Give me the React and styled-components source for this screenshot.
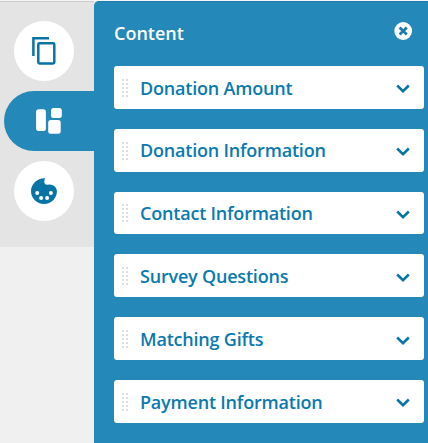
import { useState } from 'react';
import styled, { createGlobalStyle } from 'styled-components';

const GlobalStyle = createGlobalStyle`
  * {
    box-sizing: border-box;
  }

  body {
    margin: 0;
    overflow: hidden;
    background: #f0f0f0;
    font-family: 'Open Sans', 'Noto Sans', sans-serif;
  }

  button {
    border: none;
    padding: 0;
    font: inherit;
    cursor: pointer;
  }
`;

const Layout = styled.div`
  display: flex;
  align-items: flex-start;
  width: 428px;
  height: 443px;
  background: linear-gradient(#f5f5f5 1px, #f0f0f0 1px);
`;

const Sidebar = styled.nav`
  display: flex;
  flex-direction: column;
  align-items: flex-end;
  gap: 10px;
  width: 94px;
  height: 246px;
  margin-top: 1px;
  padding-top: 19px;
  background: #e4e4e4;
  border-top: 1px solid #c9cccb;
`;

const TabButton = styled.button`
  display: flex;
  align-items: center;
  width: ${props => props.$active ? '90px' : '60px'};
  height: 60px;
  margin-right: ${props => props.$active ? '0' : '20px'};
  padding-left: ${props => props.$active ? '30px' : '15px'};
  border-radius: ${props => props.$active ? '30px 0 0 30px' : '50%'};
  background: ${props => props.$active ? '#2488b8' : '#fff'};
  color: ${props => props.$active ? '#fff' : '#0873a5'};
`;

const Panel = styled.section`
  width: 334px;
  height: 442px;
  margin-top: 1px;
  padding: 20px 4px 0 20px;
  background: #2488b8;
  border-top: 1px solid #1d7dac;
  border-top-left-radius: 5px;
`;

const PanelHeader = styled.header`
  display: flex;
  justify-content: space-between;
  height: 44px;
  padding-right: 11px;
`;

const PanelTitle = styled.h2`
  margin: -1px 0 0;
  color: #fff;
  font-size: 18px;
  font-weight: 600;
  line-height: 24px;
`;

const CloseButton = styled.button`
  display: flex;
  width: 20px;
  height: 20px;
  background: transparent;
`;

const SectionList = styled.div`
  display: flex;
  flex-direction: column;
  gap: 20px;
`;

const SectionCard = styled.button`
  display: flex;
  align-items: center;
  width: 310px;
  height: 42.8px;
  padding: 0 13px 0 8px;
  border-radius: 3px;
  background: #fff;
  color: #0a7aae;
  text-align: left;
`;

const SectionName = styled.span`
  flex: 1;
  margin: 0.6px 0 0 12px;
  font-size: 18px;
  font-weight: 600;
  letter-spacing: -0.2px;
  line-height: 24px;
  white-space: nowrap;
`;

const DragHandle = styled.span`
  display: grid;
  grid-template-columns: 2px 2px;
  grid-auto-rows: 2px;
  gap: 2px;
  margin-top: 1px;
`;

const Dot = styled.span`
  background: #dedede;
`;

const CopyIcon = () => (
  <svg width="30" height="30" viewBox="0 0 30 30" fill="none" stroke="currentColor" strokeWidth="2.5">
    <path d="M4.4 20V2.3H20" />
    <rect x="9.3" y="7.3" width="16" height="20.2" rx="1.2" />
  </svg>
);

const BlocksIcon = () => (
  <svg width="30" height="30" viewBox="0 0 30 30" fill="currentColor">
    <rect x="2.1" y="3.2" width="9.8" height="21.8" rx="2.5" />
    <rect x="17" y="2" width="10.8" height="10" rx="2.5" />
    <rect x="14.2" y="14" width="12.5" height="13.7" rx="2.5" />
  </svg>
);

const PaletteIcon = () => (
  <svg width="30" height="30" viewBox="0 0 30 30">
    <path
      fill="currentColor"
      d="M16.2 2.2Q14.9 4 15.3 6.8Q15.8 9 18.4 8.8Q21.4 8.2 23.8 9.2C26.4 10.5 27.9 12.5 27.9 15.4C27.9 22 22.4 27.9 15 27.9C8 27.9 2 22.4 2 15C2 8 8.5 1.8 16.2 2.2Z"
    />
    <g fill="#fff">
      <circle cx="8.2" cy="17" r="2" />
      <circle cx="12.1" cy="22" r="2" />
      <circle cx="18.1" cy="22" r="2" />
      <circle cx="21.9" cy="17" r="2" />
    </g>
  </svg>
);

const CloseIcon = () => (
  <svg width="20" height="20" viewBox="0 0 20 20">
    <circle cx="10.2" cy="9" r="8.9" fill="#fff" />
    <path d="M6.6 5.4L13.8 12.6M13.8 5.4L6.6 12.6" stroke="#1a7dae" strokeWidth="2.8" />
  </svg>
);

const ChevronIcon = () => (
  <svg width="16" height="14" viewBox="0 0 16 14" fill="none">
    <path d="M2.2 5.5L8 11.2L13.8 5.5" stroke="#0873a5" strokeWidth="2.5" />
  </svg>
);

const tabs = [
  { id: 'pages', label: 'Pages', icon: CopyIcon },
  { id: 'content', label: 'Content', icon: BlocksIcon },
  { id: 'theme', label: 'Theme', icon: PaletteIcon },
];

const sections = [
  'Donation Amount',
  'Donation Information',
  'Contact Information',
  'Survey Questions',
  'Matching Gifts',
  'Payment Information',
];

const App = () => {
  const [activeTab, setActiveTab] = useState('content');

  return (
    <>
      <GlobalStyle />
      <Layout>
        <Sidebar>
          {tabs.map(({ id, label, icon: Icon }) => (
            <TabButton
              key={id}
              aria-label={label}
              $active={id === activeTab}
              onClick={() => setActiveTab(id)}
            >
              <Icon />
            </TabButton>
          ))}
        </Sidebar>
        <Panel>
          <PanelHeader>
            <PanelTitle>Content</PanelTitle>
            <CloseButton aria-label="Close">
              <CloseIcon />
            </CloseButton>
          </PanelHeader>
          <SectionList>
            {sections.map(name => (
              <SectionCard key={name}>
                <DragHandle>
                  {Array.from({ length: 10 }, (_, i) => <Dot key={i} />)}
                </DragHandle>
                <SectionName>{name}</SectionName>
                <ChevronIcon />
              </SectionCard>
            ))}
          </SectionList>
        </Panel>
      </Layout>
    </>
  );
};

export default App;
